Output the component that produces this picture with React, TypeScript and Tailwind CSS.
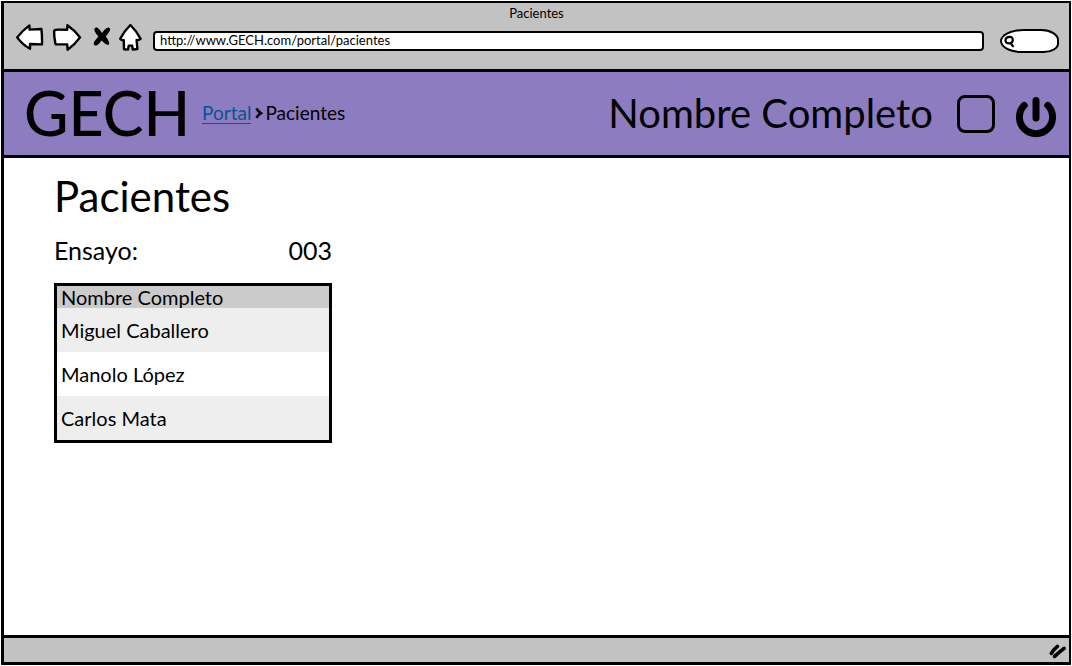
const patients = ["Miguel Caballero", "Manolo López", "Carlos Mata"];

function BackIcon() {
  return (
    <svg width="29" height="28" viewBox="0 0 29 28" fill="white" stroke="black" strokeWidth="2.4" strokeLinejoin="round" aria-hidden="true">
      <path d="M1.2 13.4 Q6 7 13.4 1.4 L13.6 5.6 L25.4 5 Q26.2 12 26 20.4 L14 20 L14 24.8 Q6.2 20.5 1.2 13.4Z" />
    </svg>
  );
}

function ForwardIcon() {
  return (
    <svg width="30" height="28" viewBox="0 0 30 28" fill="white" stroke="black" strokeWidth="2.4" strokeLinejoin="round" aria-hidden="true">
      <path d="M1.2 7 Q1.4 5.6 4.6 5.6 L14.2 5.8 L14.4 1.2 Q22 6.4 27 13.4 Q22 20.5 14.6 25.8 L14.2 20.4 L3.6 20.4 Q2 20.4 2.2 18 Q1 13 1.2 7Z" />
    </svg>
  );
}

function StopIcon() {
  return (
    <svg width="18" height="22" viewBox="0 0 18 22" fill="black" aria-hidden="true">
      <path d="M3 .2 Q6 .8 9 6 Q11.8 1 15.6 .4 Q18.2 1.4 16.4 4.6 Q14.6 7.6 12.8 9.6 Q16.8 14.8 16 17.4 Q13.4 18.6 8.6 13.4 Q4.6 18.8 2 18.6 Q-.2 17.6 1.2 14.8 Q3 12 5.4 9.4 Q1.2 4.6 1.2 2Z" />
    </svg>
  );
}

function HomeIcon() {
  return (
    <svg width="24" height="28" viewBox="0 0 24 28" fill="white" stroke="black" strokeWidth="2.4" strokeLinejoin="round" aria-hidden="true">
      <path d="M11.4 1 Q17 6.4 21.6 14.8 Q20 16.6 17.6 16 L18.4 25 L13.8 25.6 L13.2 21.6 L9.8 21.6 L9 25.6 L5 25.2 L4.8 16.2 Q2.6 16.6 1.2 14.8 Q5.4 6.8 11.4 1Z" />
    </svg>
  );
}

function SearchIcon() {
  return (
    <svg width="12" height="13" viewBox="0 0 12 13" fill="none" stroke="black" strokeWidth="2.2" strokeLinecap="round" aria-hidden="true">
      <path d="M5.2 1.8 Q8.6 1.6 8.8 5 Q8.6 8.4 5.4 8.4 Q1.6 8.4 1.4 5.2 Q1.8 2 5.2 1.8Z M6.4 8 L9 11.2" />
    </svg>
  );
}

function PowerIcon() {
  return (
    <svg width="42" height="44" viewBox="0 0 42 44" fill="none" stroke="black" strokeLinecap="round" aria-hidden="true">
      <path d="M9.2 10.4 A16.6 16.6 0 1 0 32.8 10.4" strokeWidth="7" />
      <path d="M21 5.5 V23" strokeWidth="7" />
    </svg>
  );
}

function BrowserBar() {
  return (
    <div className="border-b-3 border-black bg-[#c2c2c2] pt-0.5 pb-4">
      <div className="text-center text-[13px] leading-4">Pacientes</div>
      <div className="mt-0.5 flex items-center pr-2.5 pl-3">
        <button type="button" aria-label="Atrás"><BackIcon /></button>
        <button type="button" aria-label="Adelante" className="ml-2"><ForwardIcon /></button>
        <button type="button" aria-label="Detener" className="ml-2.5"><StopIcon /></button>
        <button type="button" aria-label="Inicio" className="ml-2"><HomeIcon /></button>
        <input
          type="text"
          aria-label="Dirección"
          defaultValue="http://www.GECH.com/portal/pacientes"
          className="mt-1.5 ml-2.5 h-5 min-w-0 flex-1 rounded-sm border-2 border-black bg-white px-[5px] pb-0.5 text-[13px]"
        />
        <label className="mt-1.5 ml-4 flex h-6 w-[59px] items-center rounded-[40%_30%_26%_36%/50%_46%_40%_50%] border-2 border-black bg-white pl-0.5">
          <SearchIcon />
          <input type="search" aria-label="Buscar" className="w-9 bg-transparent text-xs outline-none" />
        </label>
      </div>
    </div>
  );
}

function Header() {
  return (
    <header className="flex items-center border-b-3 border-black bg-[#8e7cc0] pt-px pr-3 pb-0.5 pl-5">
      <div className="text-[61px] leading-20 font-medium">GECH</div>
      <nav aria-label="Ruta" className="ml-3 flex items-center text-[19px] leading-6">
        <a href="#portal" className="border-b border-[#0b5394] leading-5 text-[#0b5394]">Portal</a>
        <svg width="8" height="12" viewBox="0 0 8 12" fill="none" stroke="black" strokeWidth="2.6" className="mr-0.5 ml-1" aria-hidden="true">
          <path d="M1.4 1.4 Q3 4.4 6 6.2 Q3.4 7.6 1.4 10.8" />
        </svg>
        <span>Pacientes</span>
      </nav>
      <div className="ml-auto flex items-center">
        <label htmlFor="user" className="text-[40px] leading-12">Nombre Completo</label>
        <input id="user" type="checkbox" className="mt-0.5 ml-6 size-[38px] appearance-none rounded-lg border-3 border-black checked:bg-black" />
        <button type="button" aria-label="Cerrar sesión" className="ml-5 pt-2"><PowerIcon /></button>
      </div>
    </header>
  );
}

export default function App() {
  return (
    <div className="flex min-h-screen flex-col bg-white p-px font-['Lato','Liberation_Sans',sans-serif] text-black">
      <div className="flex flex-1 flex-col border-t-2 border-r-2 border-b-3 border-l-3 border-black">
        <BrowserBar />
        <Header />
        <main className="flex-1 px-[50px] pt-3.5">
          <h1 className="text-[42px] leading-12">Pacientes</h1>
          <div className="mt-4 flex w-[278px] justify-between text-[25px] leading-7">
            <span>Ensayo:</span>
            <span>003</span>
          </div>
          <table className="mt-[19px] w-[278px] border-separate border-spacing-0 border-3 border-black text-left text-xl">
            <thead>
              <tr className="bg-[#cbcbcb]">
                <th scope="col" className="px-1 py-0 leading-[22px] font-normal">Nombre Completo</th>
              </tr>
            </thead>
            <tbody>
              {patients.map((name) => (
                <tr key={name} className="h-11 odd:bg-[#eeeeee]">
                  <td className="px-1 py-0">{name}</td>
                </tr>
              ))}
            </tbody>
          </table>
        </main>
        <footer className="flex h-[27px] items-center justify-end border-t-3 border-black bg-[#c2c2c2] pt-1 pr-0.5">
          <svg width="18" height="16" viewBox="0 0 18 16" fill="none" stroke="black" strokeWidth="3.6" strokeLinecap="round" aria-hidden="true">
            <path d="M2.4 9.4 Q4.6 5.4 8.4 2.4 M5.6 12.4 Q8.6 9.6 15 4.4" />
          </svg>
        </footer>
      </div>
    </div>
  );
}
